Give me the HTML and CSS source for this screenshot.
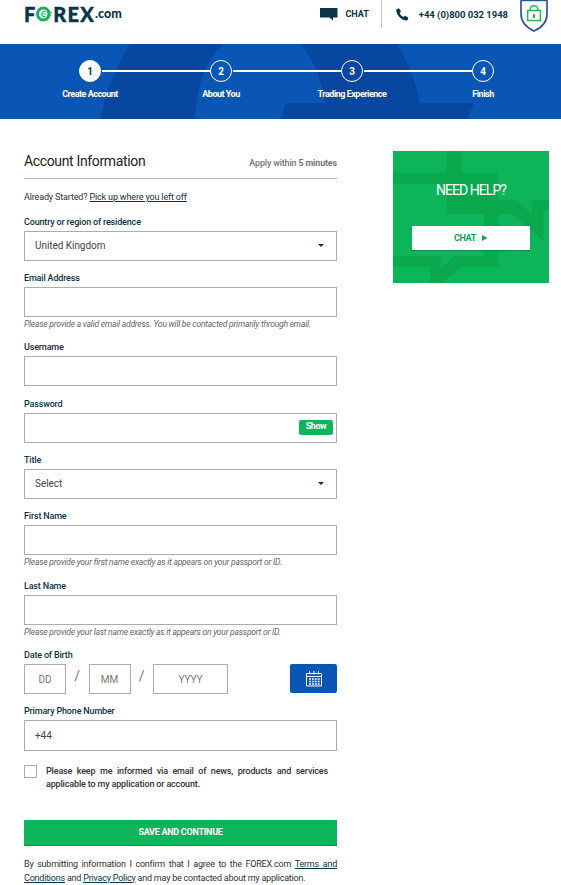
FILE: index.html
```html
<!DOCTYPE html>
<html lang="en">
<head>
    <meta charset="utf-8">
    <title>Create Account - FOREX.com</title>
    <meta name="viewport" content="width=device-width, initial-scale=1">
    <link rel="stylesheet" href="styles.css">
</head>
<body>
    <header class="header">
        <div class="logo">
            <span>F</span>
            <svg class="logo-o" width="18" height="16" viewBox="0 0 18 16">
                <ellipse cx="8.300" cy="8" rx="5.800" ry="6" fill="none" stroke="#12b35c" stroke-width="3"/>
                <path d="M10.500 5.500H8.500Q6.800 6 6.800 8t1.700 2.500h2M8 8h3M12 6.500h5M12 9.500h4" fill="none" stroke="#12b35c" stroke-width="1.200"/>
            </svg>
            <span class="logo-rex">REX</span>
            <span class="logo-com">.com</span>
        </div>
        <div class="contact">
            <a class="contact-chat">
                <svg width="18" height="13" viewBox="0 0 18 13"><path d="M0 0h17.500v9.500H13v3L9.500 9.500H0z" fill="#0b3446"/></svg>
                CHAT
            </a>
            <a class="contact-phone">
                <svg width="13" height="13" viewBox="0 0 13 13"><path d="M.8 1.200 3 .3l2 3.200-1.300 1.400c.6 1.800 2 3.200 3.800 4l1.500-1.200 3.300 1.900-.5 2.200c-.2.600-.8.800-1.500.7C5.500 12 .6 7.400.2 2.400c0-.6.200-1 .6-1.200z" fill="#0b3446"/></svg>
                <span>+44 (0)800 032 1948</span>
            </a>
            <svg class="shield" width="28" height="32" viewBox="0 0 28 32">
                <path d="M1 0.500H27V14c0 8-5 13.500-13 17C6.500 27.500 1 22 1 14z" fill="none" stroke="#315697" stroke-width="1.700"/>
                <path d="M7.600 10.600h12.800v9.800H7.600z" fill="none" stroke="#2fb357" stroke-width="1.500"/>
                <path d="M10.300 10.500V9a3.700 3.200 0 0 1 7.400 0v1.500" fill="none" stroke="#2fb357" stroke-width="1.500"/>
                <path d="M13 14h2v4h-2z" fill="#2fb357"/>
            </svg>
        </div>
    </header>

    <div class="banner">
        <svg class="banner-bg" width="561" height="75" viewBox="0 44 561 75">
            <path d="M130 44Q107 80 101 119H195Q197 68 223 44zM301 44Q320 68 325 103H286L281 119H467L474 103H420Q415 74 397 44z" fill="#08479f"/>
        </svg>
        <ol class="steps">
            <li class="step active"><span class="num">1</span>Create Account</li>
            <li class="step"><span class="num">2</span>About You</li>
            <li class="step"><span class="num">3</span>Trading Experience</li>
            <li class="step"><span class="num">4</span>Finish</li>
        </ol>
    </div>

    <main class="content">
        <form class="form">
            <div class="form-head">
                <h1>Account Information</h1>
                <span class="apply">Apply within <b>5 minutes</b></span>
            </div>
            <p class="started">Already Started? <a>Pick up where you left off</a></p>

            <div class="field">
                <label>Country or region of residence</label>
                <div class="box select">United Kingdom</div>
            </div>
            <div class="field">
                <label>Email Address</label>
                <div class="box"></div>
                <p class="hint">Please provide a valid email address. You will be contacted primarily through email.</p>
            </div>
            <div class="field">
                <label>Username</label>
                <div class="box"></div>
            </div>
            <div class="field">
                <label>Password</label>
                <div class="box password"><span class="show">Show</span></div>
            </div>
            <div class="field">
                <label>Title</label>
                <div class="box select">Select</div>
            </div>
            <div class="field">
                <label>First Name</label>
                <div class="box"></div>
                <p class="hint">Please provide your first name exactly as it appears on your passport or ID.</p>
            </div>
            <div class="field">
                <label>Last Name</label>
                <div class="box"></div>
                <p class="hint">Please provide your last name exactly as it appears on your passport or ID.</p>
            </div>
            <div class="field">
                <label>Date of Birth</label>
                <div class="dob">
                    <div class="box short">DD</div>
                    <span class="slash">/</span>
                    <div class="box short">MM</div>
                    <span class="slash">/</span>
                    <div class="box year">YYYY</div>
                    <span class="calendar">
                        <svg width="16" height="16" viewBox="0 0 16 16" fill="none" stroke="#fff">
                            <path d="M.5 2.500h15v12.500H.5zM.5 5.500h15"/>
                            <path d="M3.500 0v3.500M8 0v3.500M12.500 0v3.500"/>
                            <path d="M3 8h11M3 10.500h11M3 13h11" stroke-width="1.300" stroke-dasharray="1.900 1"/>
                        </svg>
                    </span>
                </div>
            </div>
            <div class="field">
                <label>Primary Phone Number</label>
                <div class="box">+44</div>
            </div>

            <div class="optin">
                <span class="check"></span>
                <p>Please keep me informed via email of news, products and services applicable to my application or account.</p>
            </div>

            <div class="submit">SAVE AND CONTINUE</div>
            <p class="terms">By submitting information I confirm that I agree to the FOREX.com <a>Terms and Conditions</a> and <a>Privacy Policy</a> and may be contacted about my application.</p>
        </form>

        <aside class="help">
            <svg class="help-bg" width="156" height="132" viewBox="39 33 468 396" fill="#0aa94e">
                <path d="M200 33h45v65h110v82h55l45 42v-42h52v30h-17v92l-95-80h-40v158H245l-57 49h-38v-49H39v-32h143v37l43-37h87V222H200v-90H39V98h161z"/>
            </svg>
            <h2>NEED HELP?</h2>
            <a class="help-chat">CHAT <svg width="6" height="6" viewBox="0 0 6 6"><path d="M0 0l5.500 3L0 6z" fill="#12a551"/></svg></a>
        </aside>
    </main>
</body>
</html>
```
FILE: styles.css
```css
* {
    box-sizing: border-box;
}
body {
    margin: 0;
    width: 561px;
    height: 885px;
    overflow: hidden;
    background: #fff;
    font-family: Roboto, "Liberation Sans", sans-serif;
    font-size: 9px;
    color: #333;
}
h1, h2, p, ol {
    margin: 0;
    padding: 0;
    font-weight: 400;
}
svg {
    display: block;
}

/* top bar */
.header {
    height: 44px;
    display: flex;
    justify-content: space-between;
    padding: 0 13px 0 24px;
    color: #0b3446;
}
.logo {
    display: flex;
    height: 27px;
    align-items: center;
    font-family: Lato, sans-serif;
    font-weight: 900;
    font-size: 20px;
    -webkit-text-stroke: 0.4px #0b3446;
}
.logo-rex {
    letter-spacing: 1.2px;
}
.logo-com {
    font-size: 12.5px;
    -webkit-text-stroke: 0;
}
.contact {
    display: flex;
    font-weight: 700;
}
.contact-chat {
    display: flex;
    align-items: center;
    gap: 7px;
    height: 28px;
    padding-right: 12px;
    border-right: 1px solid #b9c6cb;
}
.contact-phone {
    display: flex;
    align-items: center;
    gap: 10px;
    height: 28px;
    padding: 0 12px 0 14px;
    font-size: 9.5px;
    letter-spacing: -0.03px;
}

/* steps */
.banner {
    position: relative;
    height: 75px;
    background: #0a56b5;
}
.banner-bg {
    position: absolute;
    top: 0;
    left: 0;
}
.steps {
    position: relative;
    display: flex;
    width: 524px;
    margin-left: 24.5px;
    padding-top: 16px;
    list-style: none;
}
.step {
    position: relative;
    width: 131px;
    display: flex;
    flex-direction: column;
    align-items: center;
    line-height: 12px;
    color: #fff;
    font-weight: 700;
    letter-spacing: -0.5px;
}
.step + .step::before {
    content: "";
    position: absolute;
    top: 10px;
    right: 76px;
    width: 109px;
    height: 2px;
    background: #fff;
}
.num {
    width: 22px;
    height: 22px;
    margin-bottom: 6px;
    border: 1px solid #fff;
    border-radius: 50%;
    text-align: center;
    line-height: 21px;
    font-size: 10px;
    letter-spacing: 0;
}
.active .num {
    background: #fff;
    color: #0b3446;
}

/* form */
.content {
    display: flex;
    justify-content: space-between;
    align-items: flex-start;
    padding: 32px 12px 0 24px;
}
.form {
    width: 313px;
}
.form-head {
    display: flex;
    justify-content: space-between;
    height: 28px;
    border-bottom: 1px solid #b5b8ba;
}
h1 {
    font-size: 14px;
    line-height: 20px;
    letter-spacing: -0.35px;
    color: #222;
}
.apply {
    line-height: 24px;
    font-weight: 500;
    letter-spacing: -0.18px;
    color: #777;
}
.started {
    padding-top: 11px;
    height: 34.5px;
    line-height: 14px;
    letter-spacing: -0.15px;
}
.started a, .terms a {
    color: #0b3446;
    text-decoration: underline;
}
.field {
    margin-bottom: 9.1px;
}
.field label {
    display: block;
    height: 17px;
    line-height: 17px;
    font-weight: 500;
    letter-spacing: -0.17px;
    color: #0b3446;
}
.box {
    display: flex;
    align-items: center;
    height: 30.2px;
    padding-left: 10px;
    border: 1px solid #a9adaf;
    font-size: 10px;
    letter-spacing: -0.05px;
    color: #444;
}
.select {
    justify-content: space-between;
    padding-right: 12px;
}
.select::after {
    content: "";
    border: 3px solid transparent;
    border-top: 3px solid #0b3446;
    border-bottom: 0;
}
.password {
    justify-content: flex-end;
    padding-right: 3px;
}
.show {
    width: 34px;
    height: 15px;
    border-radius: 2px;
    background: #0db55a;
    color: #fff;
    font-size: 9px;
    font-weight: 700;
    line-height: 13px;
    text-align: center;
    letter-spacing: -0.4px;
}
.hint {
    height: 13.2px;
    line-height: 14px;
    font-size: 8.5px;
    font-style: italic;
    letter-spacing: -0.21px;
    color: #666;
    white-space: nowrap;
}
.dob {
    display: flex;
}
.dob .box {
    justify-content: center;
    padding: 0;
    color: #777;
}
.short {
    width: 42px;
}
.year {
    width: 75px;
}
.slash {
    width: 22.5px;
    text-align: center;
    font-size: 14px;
    line-height: 25px;
    color: #777;
}
.calendar {
    display: flex;
    align-items: center;
    justify-content: center;
    width: 47px;
    height: 29px;
    margin-left: auto;
    border-radius: 2px;
    background: #0a56b5;
}
.optin {
    display: flex;
    padding-top: 5px;
    line-height: 13px;
    letter-spacing: -0.16px;
}
.check {
    flex: none;
    width: 13px;
    height: 13px;
    margin-right: 9px;
    border: 1px solid #a9adaf;
}
.optin p {
    width: 282px;
    font-weight: 500;
    text-align: justify;
}
.submit {
    height: 26px;
    margin-top: 29px;
    background: #0db55a;
    border-bottom: 1px solid #0a8a45;
    color: #fff;
    font-weight: 700;
    line-height: 24px;
    text-align: center;
    letter-spacing: -0.27px;
}
.terms {
    margin-top: 11px;
    line-height: 14px;
    letter-spacing: -0.22px;
    text-align: justify;
}

/* help card */
.help {
    position: relative;
    width: 156px;
    height: 132px;
    padding: 29px 19px 0;
    background: #0db55a;
    text-align: center;
}
.help-bg {
    position: absolute;
    top: 0;
    left: 0;
}
.help h2 {
    position: relative;
    font-size: 14px;
    line-height: 20px;
    letter-spacing: -0.95px;
    color: #fff;
}
.help-chat {
    position: relative;
    display: flex;
    align-items: center;
    justify-content: center;
    gap: 6px;
    height: 25px;
    margin-top: 26px;
    background: #fff;
    border-bottom: 1px solid #0a8a45;
    color: #12a551;
    font-weight: 700;
    letter-spacing: -0.3px;
}
```
